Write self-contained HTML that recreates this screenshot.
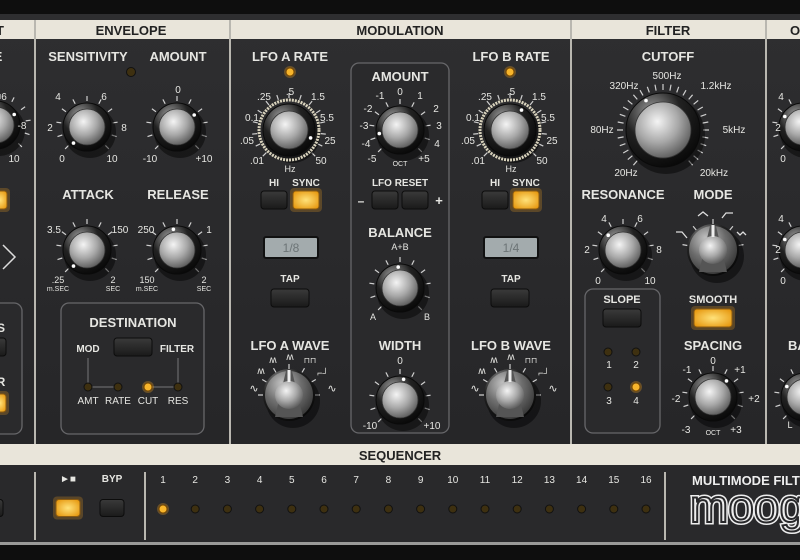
<!DOCTYPE html>
<html><head><meta charset="utf-8">
<style>
html,body{margin:0;padding:0;background:#0e0e0e;}
#root{width:800px;height:560px;overflow:hidden;position:relative;}
svg text{font-family:"Liberation Sans",sans-serif;}
</style></head><body><div id="root"></div>
<script>
var s=[];
function A(x){s.push(x);}
var W='#e6e6e2';
A('<svg xmlns="http://www.w3.org/2000/svg" width="800" height="560" viewBox="0 0 800 560">');
A('<defs><radialGradient id="silver" cx="40%" cy="35%" r="75%"><stop offset="0" stop-color="#f4f4f4"/><stop offset="0.5" stop-color="#a8a8a8"/><stop offset="1" stop-color="#4a4a4a"/></radialGradient>'+
'<radialGradient id="skirt" cx="35%" cy="25%" r="85%"><stop offset="0" stop-color="#9a9a9a"/><stop offset="0.45" stop-color="#222"/><stop offset="1" stop-color="#050505"/></radialGradient>'+
'<radialGradient id="lit" cx="50%" cy="50%" r="60%"><stop offset="0" stop-color="#ffe27a"/><stop offset="1" stop-color="#e79a12"/></radialGradient>'+
'<linearGradient id="btn" x1="0" y1="0" x2="0" y2="1"><stop offset="0" stop-color="#3a3a3a"/><stop offset="1" stop-color="#1a1a1a"/></linearGradient>'+
'<linearGradient id="bg" x1="0" y1="0" x2="0" y2="1"><stop offset="0" stop-color="#2e2e30"/><stop offset="1" stop-color="#262628"/></linearGradient></defs>');
A('<rect width="800" height="560" fill="#0e0e0e"/>');
A('<rect x="0" y="14" width="800" height="430" fill="url(#bg)"/>');
A('<rect x="0" y="20" width="800" height="19" fill="#e9e5da"/>');
A('<rect x="0" y="444" width="800" height="21" fill="#e9e5da"/>');
A('<rect x="0" y="465" width="800" height="78" fill="#29292b"/>');
A('<rect x="0" y="542" width="800" height="3" fill="#9a9a98"/>');
[35,230,571,766].forEach(function(x){A('<rect x="'+(x-1)+'" y="20" width="2" height="424" fill="#b9b7b0"/>');});
[35,145,665].forEach(function(x){A('<rect x="'+(x-1)+'" y="472" width="2" height="68" fill="#b9b7b0"/>');});
function T(x,y,t,sz,col,w,anc){A('<text x="'+x+'" y="'+y+'" font-size="'+(sz||13)+'" font-weight="'+(w||'bold')+'" fill="'+(col||W)+'" text-anchor="'+(anc||'middle')+'">'+t+'</text>');}
T(0,35,'T',13,'#222');T(131,35,'ENVELOPE',13,'#222');T(400,35,'MODULATION',13,'#222');T(668,35,'FILTER',13,'#222');T(790,35,'O',13,'#222','bold','start');
T(400,460,'SEQUENCER',13,'#222');
function box(x,y,w,h){A('<rect x="'+x+'" y="'+y+'" width="'+w+'" height="'+h+'" rx="8" fill="#2a2a2c" stroke="#67676a" stroke-width="1.3"/>');}
box(351,63,98,370);box(61,303,143,131);box(585,289,75,144);box(-10,303,32,131);
function ticks(cx,cy,r1,r2,n,a0,a1){var p='';for(var i=0;i<n;i++){var a=(a0+(a1-a0)*i/(n-1))*Math.PI/180;var s1=Math.sin(a),c1=-Math.cos(a);p+='M'+(cx+r1*s1).toFixed(1)+' '+(cy+r1*c1).toFixed(1)+'L'+(cx+r2*s1).toFixed(1)+' '+(cy+r2*c1).toFixed(1);}A('<path d="'+p+'" stroke="#cfcfcf" stroke-width="1.2" fill="none"/>');}
function knob(cx,cy,R,r,ang,ring){
 A('<circle cx="'+(cx+3)+'" cy="'+(cy+5)+'" r="'+(R+2)+'" fill="#000" opacity="0.45"/>');
 if(ring){A('<circle cx="'+cx+'" cy="'+cy+'" r="'+(R+4)+'" fill="none" stroke="#d9d3bd" stroke-width="3" stroke-dasharray="2 1"/>');}
 A('<circle cx="'+cx+'" cy="'+cy+'" r="'+R+'" fill="url(#skirt)" stroke="#0a0a0a"/>');
 A('<circle cx="'+cx+'" cy="'+cy+'" r="'+r+'" fill="url(#silver)" stroke="#333" stroke-width="0.8"/>');
 var a=ang*Math.PI/180;A('<circle cx="'+(cx+(R-3)*Math.sin(a)).toFixed(1)+'" cy="'+(cy-(R-3)*Math.cos(a)).toFixed(1)+'" r="1.8" fill="#fff"/>');
}
function wknob(cx,cy){
 A('<circle cx="'+(cx+4)+'" cy="'+(cy+6)+'" r="27" fill="#000" opacity="0.45"/>');
 A('<circle cx="'+cx+'" cy="'+cy+'" r="26" fill="url(#skirt)"/>');
 A('<circle cx="'+cx+'" cy="'+cy+'" r="24" fill="url(#silver)" opacity="0.55"/>');
 A('<path d="M'+(cx-3)+' '+(cy-24)+'L'+(cx+3)+' '+(cy-24)+'L'+(cx+14)+' '+(cy+22)+'L'+(cx-14)+' '+(cy+22)+'Z" fill="#555"/>');
 A('<circle cx="'+cx+'" cy="'+cy+'" r="14" fill="url(#silver)"/>');
 A('<rect x="'+(cx-1.5)+'" y="'+(cy-25)+'" width="3" height="12" fill="#eee"/>');
}
function btn(cx,cy,w,h,on){if(on){A('<rect x="'+(cx-w/2-3)+'" y="'+(cy-h/2-3)+'" width="'+(w+6)+'" height="'+(h+6)+'" rx="4" fill="#f0a020" opacity="0.25"/>');A('<rect x="'+(cx-w/2)+'" y="'+(cy-h/2)+'" width="'+w+'" height="'+h+'" rx="3" fill="url(#lit)" stroke="#8a5a10"/>');}
 else A('<rect x="'+(cx-w/2)+'" y="'+(cy-h/2)+'" width="'+w+'" height="'+h+'" rx="3" fill="url(#btn)" stroke="#0c0c0c"/>');}
function led(cx,cy,on,r){r=r||4.5;if(on){A('<circle cx="'+cx+'" cy="'+cy+'" r="'+(r+2)+'" fill="#f5a623" opacity="0.3"/><circle cx="'+cx+'" cy="'+cy+'" r="'+r+'" fill="#f7b52c" stroke="#7a4a00"/>');}
 else A('<circle cx="'+cx+'" cy="'+cy+'" r="'+r+'" fill="#3e3010" stroke="#111"/>');}
var N='normal';
T(88,61,'SENSITIVITY');T(178,61,'AMOUNT');led(131,72,false,4.5);
ticks(87,127,26,31,11,-135,135);knob(87,127,24,18,-140);
T(58,100,'4',10,null,N);T(104,100,'6',10,null,N);T(50,131,'2',10,null,N);T(124,131,'8',10,null,N);T(62,162,'0',10,null,N);T(112,162,'10',10,null,N);
ticks(177,127,26,31,11,-135,135);knob(177,127,24,18,55);
T(178,93,'0',10,null,N);T(150,162,'-10',10,null,N);T(204,162,'+10',10,null,N);
T(88,199,'ATTACK');T(178,199,'RELEASE');
ticks(87,250,26,31,11,-135,135);knob(87,250,24,18,-140);
ticks(177,250,26,31,11,-135,135);knob(177,250,24,18,-10);
T(54,233,'3.5',10,null,N);T(120,233,'150',10,null,N);T(146,233,'250',10,null,N);T(209,233,'1',10,null,N);
T(58,283,'.25',9,null,N);T(58,291,'m.SEC',7,null,N);T(113,283,'2',9,null,N);T(113,291,'SEC',7,null,N);
T(147,283,'150',9,null,N);T(147,291,'m.SEC',7,null,N);T(204,283,'2',9,null,N);T(204,291,'SEC',7,null,N);
T(133,327,'DESTINATION');T(88,352,'MOD',10);T(177,352,'FILTER',10);btn(133,347,38,18,false);
A('<path d="M88 358V387M88 387H118M148 387H178M178 358V387" stroke="#777" stroke-width="1" fill="none"/>');
led(88,387,false,4);led(118,387,false,4);led(148,387,true,4);led(178,387,false,4);
T(88,404,'AMT',10,null,N);T(118,404,'RATE',10,null,N);T(148,404,'CUT',10,null,N);T(178,404,'RES',10,null,N);
T(-2,61,'E');ticks(0,125,26,31,11,-135,135);knob(-4,125,24,18,60);T(4,100,'6',10,null,N);T(22,129,'-8',10,null,N);T(14,162,'10',10,null,N);
btn(0,200,14,18,true);T(1,332,'S',12);btn(0,347,12,18,false);T(1,386,'R',12);btn(0,403,12,18,true);
A('<path d="M3 245L15 257L3 269" stroke="#ddd" stroke-width="1.5" fill="none"/>');
T(290,61,'LFO A RATE');led(290,72,true,4);
ticks(289,130,32,37,15,-135,135);knob(289,130,26,19,110,true);
T(290,95,'.5',10,null,N);T(264,100,'.25',10,null,N);T(318,100,'1.5',10,null,N);T(252,121,'0.1',10,null,N);T(327,121,'5.5',10,null,N);T(247,144,'.05',10,null,N);T(330,144,'25',10,null,N);T(257,164,'.01',10,null,N);T(321,164,'50',10,null,N);T(290,172,'Hz',9,null,N);
T(274,186,'HI',10);T(306,186,'SYNC',10);btn(274,200,26,18,false);btn(306,200,26,18,true);
A('<rect x="264" y="237" width="54" height="21" rx="2" fill="#a3abad" stroke="#111" stroke-width="2"/>');T(291,252,'1/8',12,'#6c7476',N);
T(290,282,'TAP',10);btn(290,298,38,18,false);
T(290,350,'LFO A WAVE');
ticks(289,395,26,31,7,-90,90);wknob(289,395);
T(254,392,'∿',11,null,N);T(261,374,'ʍ',10,null,N);T(273,363,'ʍ',10,null,N);T(290,360,'ʍ',10,null,N);T(310,363,'⊓⊓',8,null,N);T(323,376,'⌐┘',9,null,N);T(332,392,'∿',11,null,N);
T(400,81,'AMOUNT');ticks(400,130,26,31,11,-135,135);knob(400,130,24,18,-100);
T(400,95,'0',10,null,N);T(380,99,'-1',10,null,N);T(420,99,'1',10,null,N);T(368,112,'-2',10,null,N);T(436,112,'2',10,null,N);T(364,129,'-3',10,null,N);T(439,129,'3',10,null,N);T(366,147,'-4',10,null,N);T(437,147,'4',10,null,N);T(372,162,'-5',10,null,N);T(424,162,'+5',10,null,N);T(400,166,'OCT',7,null,N);
T(400,186,'LFO RESET',10);btn(385,200,26,18,false);btn(415,200,26,18,false);T(361,205,'–',12);T(439,205,'+',13);
T(400,237,'BALANCE');T(400,250,'A+B',9,null,N);ticks(400,288,26,31,11,-135,135);knob(400,288,24,18,-5);T(373,320,'A',9,null,N);T(427,320,'B',9,null,N);
T(400,350,'WIDTH');T(400,364,'0',10,null,N);ticks(400,400,26,31,11,-135,135);knob(400,400,24,18,10);T(370,429,'-10',10,null,N);T(432,429,'+10',10,null,N);
T(511,61,'LFO B RATE');led(510,72,true,4);
ticks(510,130,32,37,15,-135,135);knob(510,130,26,19,30,true);
T(511,95,'.5',10,null,N);T(485,100,'.25',10,null,N);T(539,100,'1.5',10,null,N);T(473,121,'0.1',10,null,N);T(548,121,'5.5',10,null,N);T(468,144,'.05',10,null,N);T(552,144,'25',10,null,N);T(478,164,'.01',10,null,N);T(542,164,'50',10,null,N);T(511,172,'Hz',9,null,N);
T(495,186,'HI',10);T(526,186,'SYNC',10);btn(495,200,26,18,false);btn(526,200,26,18,true);
A('<rect x="484" y="237" width="54" height="21" rx="2" fill="#a3abad" stroke="#111" stroke-width="2"/>');T(511,252,'1/4',12,'#6c7476',N);
T(511,282,'TAP',10);btn(510,298,38,18,false);
T(511,350,'LFO B WAVE');ticks(510,395,26,31,7,-90,90);wknob(510,395);
T(475,392,'∿',11,null,N);T(482,374,'ʍ',10,null,N);T(494,363,'ʍ',10,null,N);T(511,360,'ʍ',10,null,N);T(531,363,'⊓⊓',8,null,N);T(544,376,'⌐┘',9,null,N);T(553,392,'∿',11,null,N);
T(668,61,'CUTOFF');ticks(663,130,40,46,29,-140,140);knob(663,130,37,28,-30);
T(667,79,'500Hz',10,null,N);T(624,89,'320Hz',10,null,N);T(716,89,'1.2kHz',10,null,N);T(602,133,'80Hz',10,null,N);T(734,133,'5kHz',10,null,N);T(626,176,'20Hz',10,null,N);T(714,176,'20kHz',10,null,N);
T(623,199,'RESONANCE');T(713,199,'MODE');
ticks(623,250,26,31,11,-135,135);knob(623,250,24,18,-45);T(604,222,'4',10,null,N);T(640,222,'6',10,null,N);T(587,253,'2',10,null,N);T(659,253,'8',10,null,N);T(598,284,'0',10,null,N);T(650,284,'10',10,null,N);
ticks(713,250,26,31,5,-80,80);wknob(713,250);
A('<path d="M676 232h6l5 6M698 216l5-4 5 4M722 218l4-5h7M737 232l3 3 3-3 3 3" stroke="#ddd" stroke-width="1.3" fill="none"/>');
T(622,303,'SLOPE',11);btn(622,318,38,18,false);
led(608,352,false,4);led(636,352,false,4);led(608,387,false,4);led(636,387,true,4);
T(609,368,'1',10,null,N);T(636,368,'2',10,null,N);T(609,404,'3',10,null,N);T(636,404,'4',10,null,N);
T(713,303,'SMOOTH',11);btn(713,318,38,18,true);
T(713,350,'SPACING');ticks(713,397,26,31,11,-135,135);knob(713,397,24,18,40);
T(713,364,'0',10,null,N);T(687,373,'-1',10,null,N);T(740,373,'+1',10,null,N);T(676,402,'-2',10,null,N);T(754,402,'+2',10,null,N);T(686,433,'-3',10,null,N);T(736,433,'+3',10,null,N);T(713,435,'OCT',7,null,N);
T(806,61,'V');ticks(803,127,26,31,11,-135,135);knob(803,127,24,18,-60);T(781,100,'4',10,null,N);T(778,131,'2',10,null,N);T(783,162,'0',10,null,N);
ticks(803,250,26,31,11,-135,135);knob(803,250,24,18,-60);T(781,222,'4',10,null,N);T(778,253,'2',10,null,N);T(783,284,'0',10,null,N);
T(788,350,'BA',13,null,'bold','start');
ticks(805,397,26,31,11,-135,135);knob(805,397,24,18,-60);T(790,428,'L',9,null,N);
T(68,482,'►■',10);T(112,482,'BYP',10);btn(68,508,24,17,true);btn(112,508,24,17,false);btn(-2,508,10,17,false);
for(var i=0;i<16;i++){var x=163+i*32.2;T(x.toFixed(1),483,String(i+1),10,null,N);led(x.toFixed(1),509,i==0,4);}
T(692,485,'MULTIMODE FILTER',13,'#eee','bold','start');
A('<text x="690" y="522" font-size="46" font-weight="normal" fill="none" stroke="#eee" stroke-width="5" font-family="Liberation Sans,sans-serif">moog</text>');
A('<text x="690" y="522" font-size="46" font-weight="normal" fill="none" stroke="#29292b" stroke-width="2" font-family="Liberation Sans,sans-serif">moog</text>');
A('</svg>');
document.getElementById('root').innerHTML=s.join('');
</script></body></html>
